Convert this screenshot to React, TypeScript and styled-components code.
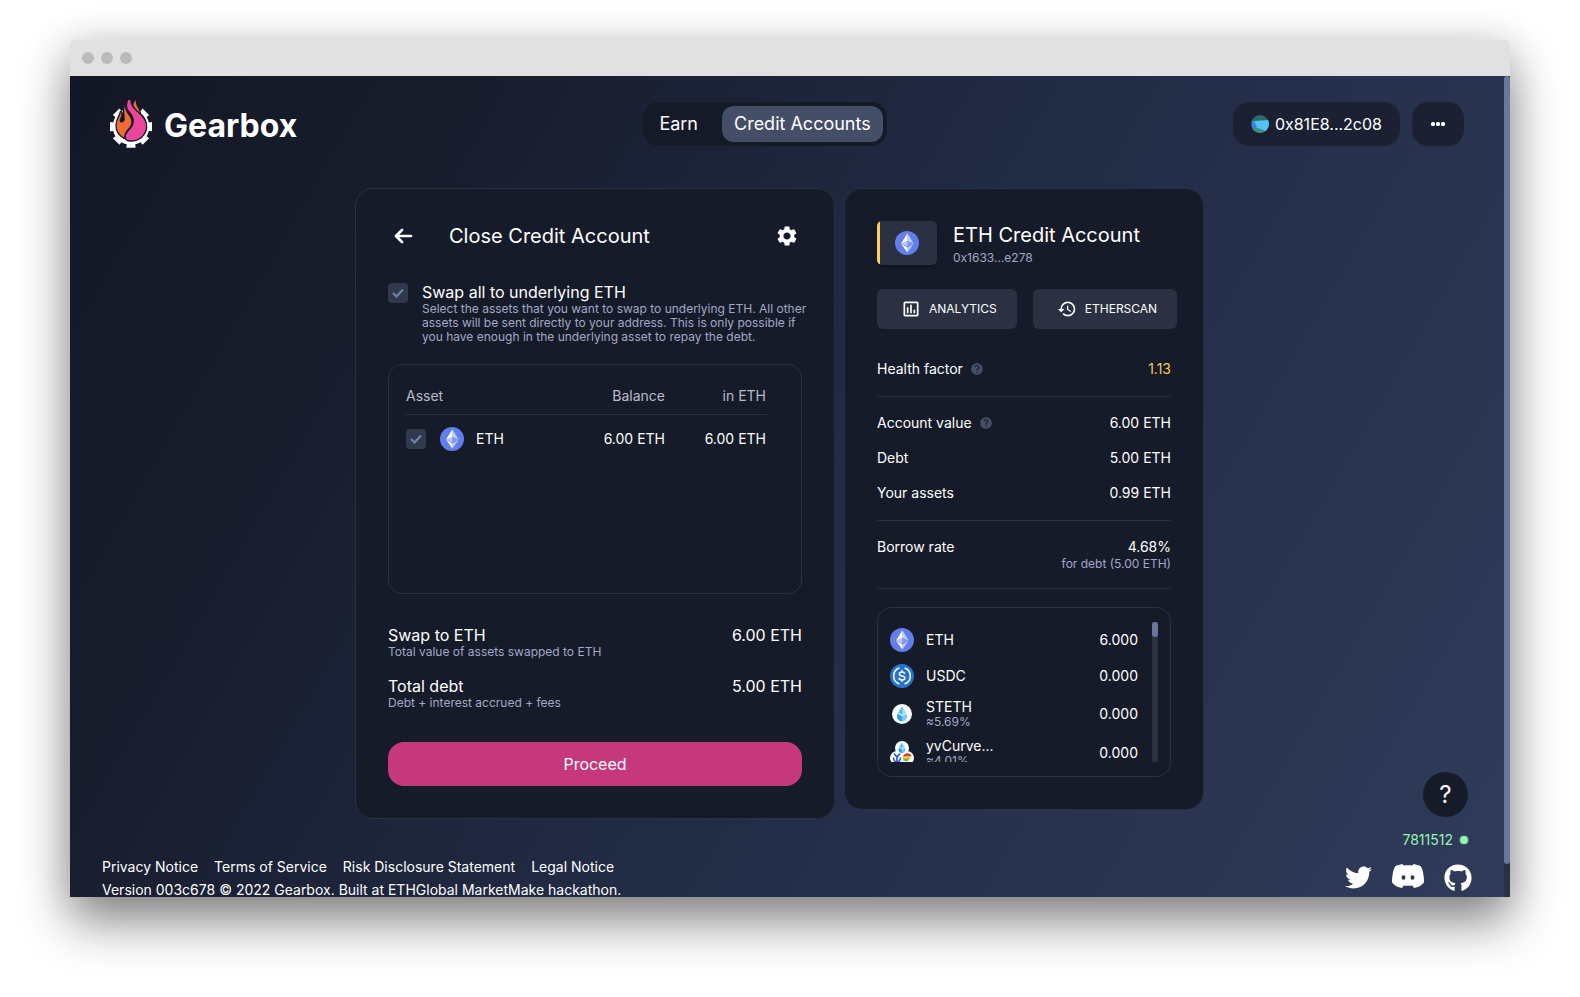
import React from "react";
import styled, { createGlobalStyle } from "styled-components";
import { MdSettings, MdHelp, MdHistory, MdOutlineAssessment } from "react-icons/md";
import { FaTwitter, FaGithub } from "react-icons/fa";

const color = {
  card: "#161b29",
  line: "#2a3044",
  raised: "#2b3042",
  check: "#31394f",
  muted: "#a3a8c8",
  accent: "#c5387c",
  thumb: "#6a769c",
  yellow: "#f5c952",
  green: "#94f5b0",
};

const Global = createGlobalStyle`
  * { box-sizing: border-box; }
  body {
    margin: 0;
    background: #fff;
    color: #fff;
    font-family: Inter, Roboto, "Liberation Sans", sans-serif;
    font-size: 14px;
    line-height: 20px;
  }
  a { color: inherit; text-decoration: none; }
  button { font: inherit; color: inherit; border: 0; padding: 0; background: none; cursor: pointer; }
  h1, h2, p, dl, dd, ul { margin: 0; padding: 0; font-weight: 400; }
  svg { display: block; flex: none; }
`;

const Page = styled.div`
  height: 100vh;
  padding: 40px 70px 100px;
  overflow: hidden;
`;

const BrowserWindow = styled.div`
  display: flex;
  flex-direction: column;
  height: 100%;
  border-radius: 5px 5px 0 0;
  box-shadow: 0 25px 50px rgba(0, 0, 0, 0.46), 0 0 40px rgba(0, 0, 0, 0.12);
`;

const TitleBar = styled.div`
  display: flex;
  align-items: center;
  gap: 7px;
  flex: none;
  height: 36px;
  padding: 0 12px;
  background: #e1e1e1;
  border-radius: 5px 5px 0 0;
`;

const WindowDot = styled.span`
  width: 12px;
  height: 12px;
  border-radius: 50%;
  background: #bababa;
`;

const Viewport = styled.div`
  display: flex;
  flex: 1;
  min-height: 0;
  position: relative;
  background: linear-gradient(120deg, #131725 0%, #181d2d 22%, #212a43 50%, #29334f 75%, #303b5b 100%);
`;

const Content = styled.div`
  flex: 1;
  min-width: 0;
  overflow: hidden;
`;

const ScrollTrack = styled.div`
  flex: none;
  width: 6px;
  background: ${color.raised};
`;

const ScrollThumb = styled.div<{ $size: string }>`
  height: ${(p) => p.$size};
  border-radius: 3px;
  background: ${color.thumb};
`;

const Header = styled.header`
  display: flex;
  align-items: center;
  justify-content: space-between;
  padding: 24px 40px 0;
`;

const Brand = styled.a`
  display: flex;
  align-items: flex-end;
  gap: 12px;
  font-size: 32px;
  line-height: 44px;
  font-weight: 700;
`;

const Tabs = styled.nav`
  display: flex;
  gap: 12px;
  padding: 4px;
  border-radius: 16px;
  background: #151a28;
`;

const Tab = styled.a<{ $active?: boolean }>`
  padding: 0 12px;
  border-radius: 12px;
  background: ${(p) => (p.$active ? "#454e67" : "transparent")};
  font-size: 18px;
  line-height: 36px;
`;

const HeaderActions = styled.div`
  display: flex;
  gap: 12px;
`;

const PillButton = styled.button`
  display: flex;
  align-items: center;
  gap: 6px;
  height: 44px;
  padding: 0 18px;
  border-radius: 16px;
  background: #1b2133;
  font-size: 16px;
`;

const Main = styled.main`
  display: flex;
  justify-content: center;
  align-items: flex-start;
  gap: 9px;
  padding: 40px 15px 36px 0;
`;

const Card = styled.section<{ $width: number }>`
  width: ${(p) => p.$width}px;
  padding: 32px;
  border: 1px solid ${color.line};
  border-radius: 18px;
  background: ${color.card};
`;

const CardHeader = styled.div`
  display: flex;
  align-items: center;
  height: 30px;
  padding: 0 3px;
`;

const IconButton = styled.button`
  display: grid;
  place-items: center;
  width: 24px;
  height: 24px;
`;

const CardTitle = styled.h1`
  flex: 1;
  padding-left: 34px;
  font-size: 20px;
  line-height: 28px;
`;

const AccountTitle = styled.h2`
  font-size: 20px;
  line-height: 28px;
`;

const Caption = styled.span`
  display: block;
  color: ${color.muted};
  font-size: 12px;
  line-height: 14px;
  white-space: nowrap;
`;

const Lead = styled.span`
  display: block;
  font-size: 16px;
  line-height: 19px;
`;

const SwapAll = styled.label`
  display: flex;
  gap: 14px;
  margin-top: 32px;
`;

const CheckFrame = styled.span`
  display: inline-grid;
  flex: none;
  width: 20px;
  height: 20px;

  > * { grid-area: 1 / 1; place-self: center; }
  > svg { pointer-events: none; }
`;

const CheckInput = styled.input`
  appearance: none;
  width: 20px;
  height: 20px;
  margin: 0;
  border-radius: 4px;
  background: ${color.check};
`;

const AssetBox = styled.div`
  height: 230px;
  margin-top: 20px;
  padding: 16px 34px 16px 16px;
  border: 1px solid ${color.line};
  border-radius: 14px;
`;

const AssetTable = styled.table`
  width: 100%;
  border-collapse: collapse;
  table-layout: fixed;
`;

const HeadCell = styled.th<{ $width?: number }>`
  width: ${(p) => (p.$width ? `${p.$width}px` : "auto")};
  height: 33px;
  padding: 0 1px 2px;
  border-bottom: 1px solid ${color.line};
  color: #b9bccb;
  font-weight: 400;
  text-align: ${(p) => (p.$width ? "right" : "left")};
`;

const AssetCell = styled.td<{ $numeric?: boolean }>`
  height: 49px;
  padding: 0 1px;
  text-align: ${(p) => (p.$numeric ? "right" : "left")};
`;

const AssetName = styled.label`
  display: flex;
  align-items: center;

  > svg { margin: 0 12px 0 14px; }
`;

const Summary = styled.dl`
  display: grid;
  gap: 18px;
  margin: 32px 0;
`;

const SummaryRow = styled.div`
  display: flex;
  justify-content: space-between;
`;

const Proceed = styled.button`
  width: 100%;
  height: 44px;
  border-radius: 16px;
  background: ${color.accent};
  font-size: 16px;
`;

const AccountHeader = styled.div`
  display: flex;
  gap: 16px;
`;

const AccountTile = styled.div`
  display: grid;
  place-items: center;
  width: 60px;
  height: 44px;
  border-radius: 5px;
  background: linear-gradient(90deg, #ffd057 3px, ${color.raised} 3px);
  box-shadow: 0 2px 3px rgba(0, 0, 0, 0.3);
`;

const AccountText = styled.div`
  display: flex;
  flex-direction: column;
  justify-content: space-between;
`;

const ExternalLinks = styled.div`
  display: flex;
  gap: 16px;
  width: max-content;
  margin: 24px 0 30px;
`;

const ExternalLink = styled.a`
  display: flex;
  align-items: center;
  gap: 8px;
  height: 40px;
  padding: 0 20px 0 24px;
  border-radius: 6px;
  background: ${color.raised};
  font-size: 12px;
`;

const Group = styled.dl`
  display: grid;
  gap: 15px;
  padding-bottom: 17px;
  margin-bottom: 16px;
  border-bottom: 1px solid ${color.line};
`;

const GroupRow = styled.div`
  display: flex;
  justify-content: space-between;
  align-items: flex-start;
`;

const Term = styled.dt`
  display: flex;
  align-items: center;
  gap: 7px;
`;

const Value = styled.dd<{ $tone?: string }>`
  color: ${(p) => p.$tone ?? "inherit"};
  text-align: right;
`;

const BalanceBox = styled.div`
  display: flex;
  justify-content: space-between;
  gap: 14px;
  height: 170px;
  margin-top: 18px;
  padding: 14px 12px;
  border: 1px solid ${color.line};
  border-radius: 14px;
`;

const BalanceList = styled.ul`
  flex: 1;
  overflow: hidden;
  list-style: none;
`;

const BalanceRow = styled.li<{ $tall: boolean }>`
  display: flex;
  align-items: center;
  gap: 12px;
  height: ${(p) => (p.$tall ? 39 : 36)}px;
  line-height: 16px;
`;

const BalanceName = styled.span`
  flex: 1;
`;

const Footer = styled.footer`
  display: flex;
  justify-content: space-between;
  align-items: flex-start;
  padding: 0 32px;
  line-height: 23px;
  white-space: nowrap;
`;

const LegalLinks = styled.div`
  display: flex;
  gap: 16px;
`;

const Copyright = styled.p`
  display: flex;
  gap: 4px;
`;

const Social = styled.div`
  display: flex;
  align-items: flex-start;
  gap: 20px;
  padding-top: 9px;
`;

const Floating = styled.div`
  position: absolute;
  right: 42px;
  bottom: 49px;
  display: flex;
  flex-direction: column;
  align-items: flex-end;
  gap: 15px;
`;

const HelpButton = styled.button`
  width: 45px;
  height: 45px;
  border-radius: 50%;
  background: ${color.card};
  font-size: 24px;
  line-height: 45px;
`;

const BlockNumber = styled.a`
  display: flex;
  align-items: center;
  gap: 7px;
  color: ${color.green};
  line-height: 16px;
`;

const StatusDot = styled.span`
  width: 8px;
  height: 8px;
  border-radius: 50%;
  background: ${color.green};
  box-shadow: 0 0 3px rgba(148, 245, 176, 0.5);
`;

const Logo = () => (
  <svg width="42" height="48" viewBox="0 0 126 144" aria-hidden="true">
    <g fill="#fff">
      {[0, 45, 90, 135, 180, 225, 270, 315].map((a) => (
        <path key={a} d="M49 17 H77 L75 32 H51 Z" transform={`rotate(${a} 63 80)`} />
      ))}
      <circle cx="63" cy="80" r="55" />
    </g>
    <circle cx="64" cy="76" r="46" fill="#141826" />
    <g stroke="#141826" strokeWidth="8" strokeLinejoin="round" paintOrder="stroke">
      <path fill="#f26a35" d="M78 0C69 9 68 19 74 27C79 32 84 35 89 38C89 24 74 18 78 0Z" />
      <path
        fill="#f26a35"
        d="M44 18C44 27 50 38 58 48C66 60 66 72 58 82C50 92 42 100 43 113C29 106 20 92 20 76C20 59 30 51 33 36C38 44 28 56 29 64C32 70 42 68 44 60C46 50 40 34 44 18Z"
      />
      <path
        fill="#ec459d"
        d="M55 0C50 12 50 24 58 34C68 46 76 58 69 76C64 88 48 96 47 112C48 119 53 121 61 121C86 122 107 104 108 80C108 60 96 50 84 38C72 28 61 18 61 0Z"
      />
    </g>
  </svg>
);

const EthIcon = () => (
  <svg width="24" height="24" viewBox="0 0 32 32" aria-hidden="true">
    <circle cx="16" cy="16" r="16" fill="#627eea" />
    <g fill="#fff">
      <path fillOpacity=".6" d="M16.5 3v9.87l8.34 3.73z" />
      <path d="M16.5 3 8.16 16.6l8.34-3.73z" />
      <path fillOpacity=".6" d="M16.5 21.97v6.7L24.84 17z" />
      <path d="M16.5 28.67v-6.7L8.16 17z" />
      <path fillOpacity=".2" d="m16.5 20.57 8.34-3.97-8.34-3.73z" />
      <path fillOpacity=".6" d="m8.16 16.6 8.34 3.97v-7.7z" />
    </g>
  </svg>
);

const UsdcIcon = () => (
  <svg width="24" height="24" viewBox="0 0 32 32" aria-hidden="true">
    <circle cx="16" cy="16" r="16" fill="#2775ca" />
    <g fill="none" stroke="#fff" strokeWidth="2">
      <path d="M12.5 5.4a11.2 11.2 0 0 0 0 21.2M19.5 5.4a11.2 11.2 0 0 1 0 21.2" />
      <path d="M19.6 13.2c-.3-1.8-1.6-2.5-3.6-2.5-2.2 0-3.6 1-3.6 2.6 0 3.8 7.4 1.5 7.4 5.4 0 1.7-1.5 2.7-3.8 2.7-2.2 0-3.7-.9-3.9-2.8M16 8.3v2.4M16 21.4v2.4" />
    </g>
  </svg>
);

const StethMark = () => (
  <>
    <path fill="#4bb4f5" d="M12 4.5 8.2 10.7 12 13l3.8-2.3z" />
    <path fill="#9ad9fb" d="M12 4.5v8.5l3.8-2.3z" />
    <path fill="#2f9fe8" d="M7.7 11.6 12 14.2v5.3a5.2 5.2 0 0 1-4.3-7.9z" />
    <path fill="#7accf8" d="M16.3 11.6 12 14.2v5.3a5.2 5.2 0 0 0 4.3-7.9z" />
  </>
);

const StethIcon = () => (
  <svg width="24" height="24" viewBox="0 0 24 24" aria-hidden="true">
    <circle cx="12" cy="12" r="10" fill="#fff" />
    <StethMark />
  </svg>
);

const CurveIcon = () => (
  <svg width="24" height="24" viewBox="0 0 24 24" aria-hidden="true">
    <g fill="#fff">
      <circle cx="12" cy="7" r="7" />
      <circle cx="7" cy="17" r="7" />
      <circle cx="17" cy="17" r="7" />
    </g>
    <g transform="translate(3.6 -1.4) scale(.7)">
      <StethMark />
    </g>
    <path
      d="M4 12.5l3 3.5 3-3.5M7 16v5M3.5 16.5c0 2.5 1.5 4.5 3.5 4.5s3.5-2 3.5-4.5"
      fill="none"
      stroke="#2450e0"
      strokeWidth="1.6"
    />
    <path d="M13 16c.5-5 8-5 8.500-.5z" fill="#e23b2e" />
    <path d="M13 15.500l8.500-.5-1.500 3h-7z" fill="#f7d038" />
    <path d="M13 17.500h6.500l-2 3-4-1z" fill="#5ac35a" />
  </svg>
);

const AvatarIcon = () => (
  <svg width="18" height="18" viewBox="0 0 18 18" aria-hidden="true">
    <clipPath id="avatar">
      <circle cx="9" cy="9" r="9" />
    </clipPath>
    <g clipPath="url(#avatar)">
      <rect width="18" height="18" fill="#2b6a66" />
      <path d="M0 12h18v6H0z" fill="#3d8f86" />
      <path d="M2 6l16-1v10l-3 1-11-4z" fill="#55c2f5" />
      <path d="M1 5.5 3 6l3 6-5 1z" fill="#3b7fe8" />
    </g>
  </svg>
);

const DotsIcon = () => (
  <svg width="16" height="16" viewBox="0 0 16 16" fill="#fff" aria-hidden="true">
    <rect x="1" y="6" width="4" height="4" rx="1.5" />
    <rect x="6" y="6" width="4" height="4" rx="1.5" />
    <rect x="11" y="6" width="4" height="4" rx="1.5" />
  </svg>
);

const DiscordIcon = () => (
  <svg width="32" height="24" viewBox="0 0 32 24" fill="#fff" aria-hidden="true">
    <path
      fillRule="evenodd"
      d="M10.500 0C7.700.4 5 1.200 3 2.500 1 6.500 0 12 0 18.500c2.300 3 6 5 10 5.500l1.700-2.600c2.800.6 5.800.6 8.600 0L22 24c4-.5 7.700-2.500 10-5.500C32 12 31 6.500 29 2.500 27 1.200 24.300.4 21.500 0l-1.200 1.600c-2.800-.4-5.800-.4-8.600 0zM11.500 11.300a2 2.200 0 1 0 0 4.400a2 2.200 0 1 0 0-4.400zM20.500 11.300a2 2.200 0 1 0 0 4.400a2 2.200 0 1 0 0-4.400z"
    />
  </svg>
);

const BackIcon = () => (
  <svg
    width="20"
    height="20"
    viewBox="0 0 20 20"
    fill="none"
    stroke="#fff"
    strokeWidth="2.7"
    strokeLinecap="round"
    strokeLinejoin="round"
    aria-hidden="true"
  >
    <path d="M18 10H3M9 4l-6 6 6 6" />
  </svg>
);

const Checkbox = ({ id }: { id: string }) => (
  <CheckFrame>
    <CheckInput type="checkbox" id={id} defaultChecked />
    <svg width="12" height="10" viewBox="0 0 12 10" fill="none" stroke="#7684ad" strokeWidth="2" aria-hidden="true">
      <path d="M1 5l3.5 3.5L11 1.5" />
    </svg>
  </CheckFrame>
);

const assets = [{ name: "ETH", balance: "6.00 ETH", value: "6.00 ETH" }];

const summary = [
  { label: "Swap to ETH", note: "Total value of assets swapped to ETH", value: "6.00 ETH" },
  { label: "Total debt", note: "Debt + interest accrued + fees", value: "5.00 ETH" },
];

const details: { label: string; value: string; note?: string; tone?: string; help?: boolean }[][] = [
  [{ label: "Health factor", value: "1.13", tone: color.yellow, help: true }],
  [
    { label: "Account value", value: "6.00 ETH", help: true },
    { label: "Debt", value: "5.00 ETH" },
    { label: "Your assets", value: "0.99 ETH" },
  ],
  [{ label: "Borrow rate", value: "4.68%", note: "for debt (5.00 ETH)" }],
];

const balances = [
  { name: "ETH", amount: "6.000", Icon: EthIcon },
  { name: "USDC", amount: "0.000", Icon: UsdcIcon },
  { name: "STETH", apy: "≈5.69%", amount: "0.000", Icon: StethIcon },
  { name: "yvCurve...", apy: "≈4.01%", amount: "0.000", Icon: CurveIcon },
];

const legal = ["Privacy Notice", "Terms of Service", "Risk Disclosure Statement", "Legal Notice"];

const CloseAccountCard = () => (
  <Card $width={480}>
    <CardHeader>
      <IconButton aria-label="Back">
        <BackIcon />
      </IconButton>
      <CardTitle>Close Credit Account</CardTitle>
      <IconButton aria-label="Settings">
        <MdSettings size={24} />
      </IconButton>
    </CardHeader>
    <SwapAll htmlFor="swap-all">
      <Checkbox id="swap-all" />
      <span>
        <Lead>Swap all to underlying ETH</Lead>
        <Caption>
          Select the assets that you want to swap to underlying ETH. All other
          <br />
          assets will be sent directly to your address. This is only possible if
          <br />
          you have enough in the underlying asset to repay the debt.
        </Caption>
      </span>
    </SwapAll>
    <AssetBox>
      <AssetTable>
        <thead>
          <tr>
            <HeadCell>Asset</HeadCell>
            <HeadCell $width={100}>Balance</HeadCell>
            <HeadCell $width={101}>in ETH</HeadCell>
          </tr>
        </thead>
        <tbody>
          {assets.map((a) => (
            <tr key={a.name}>
              <AssetCell>
                <AssetName htmlFor={`asset-${a.name}`}>
                  <Checkbox id={`asset-${a.name}`} />
                  <EthIcon />
                  {a.name}
                </AssetName>
              </AssetCell>
              <AssetCell $numeric>{a.balance}</AssetCell>
              <AssetCell $numeric>{a.value}</AssetCell>
            </tr>
          ))}
        </tbody>
      </AssetTable>
    </AssetBox>
    <Summary>
      {summary.map((s) => (
        <SummaryRow key={s.label}>
          <dt>
            <Lead>{s.label}</Lead>
            <Caption>{s.note}</Caption>
          </dt>
          <dd>
            <Lead>{s.value}</Lead>
          </dd>
        </SummaryRow>
      ))}
    </Summary>
    <Proceed>Proceed</Proceed>
  </Card>
);

const AccountCard = () => (
  <Card $width={360}>
    <AccountHeader>
      <AccountTile>
        <EthIcon />
      </AccountTile>
      <AccountText>
        <AccountTitle>ETH Credit Account</AccountTitle>
        <Caption>0x1633...e278</Caption>
      </AccountText>
    </AccountHeader>
    <ExternalLinks>
      <ExternalLink href="#analytics">
        <MdOutlineAssessment size={20} />
        ANALYTICS
      </ExternalLink>
      <ExternalLink href="#etherscan">
        <MdHistory size={20} />
        ETHERSCAN
      </ExternalLink>
    </ExternalLinks>
    {details.map((rows) => (
      <Group key={rows[0].label}>
        {rows.map((r) => (
          <GroupRow key={r.label}>
            <Term>
              {r.label}
              {r.help && <MdHelp size={14} color="#454e67" />}
            </Term>
            <Value $tone={r.tone}>
              {r.value}
              {r.note && <Caption>{r.note}</Caption>}
            </Value>
          </GroupRow>
        ))}
      </Group>
    ))}
    <BalanceBox>
      <BalanceList>
        {balances.map(({ name, apy, amount, Icon }) => (
          <BalanceRow key={name} $tall={Boolean(apy)}>
            <Icon />
            <BalanceName>
              {name}
              {apy && <Caption>{apy}</Caption>}
            </BalanceName>
            {amount}
          </BalanceRow>
        ))}
      </BalanceList>
      <ScrollTrack>
        <ScrollThumb $size="15px" />
      </ScrollTrack>
    </BalanceBox>
  </Card>
);

export default function App() {
  return (
    <Page>
      <Global />
      <BrowserWindow>
        <TitleBar>
          <WindowDot />
          <WindowDot />
          <WindowDot />
        </TitleBar>
        <Viewport>
          <Content>
            <Header>
              <Brand href="#home">
                <Logo />
                Gearbox
              </Brand>
              <Tabs>
                <Tab href="#earn">Earn</Tab>
                <Tab href="#accounts" $active>
                  Credit Accounts
                </Tab>
              </Tabs>
              <HeaderActions>
                <PillButton>
                  <AvatarIcon />
                  0x81E8...2c08
                </PillButton>
                <PillButton aria-label="More">
                  <DotsIcon />
                </PillButton>
              </HeaderActions>
            </Header>
            <Main>
              <CloseAccountCard />
              <AccountCard />
            </Main>
            <Footer>
              <div>
                <LegalLinks>
                  {legal.map((l) => (
                    <a key={l} href="#legal">
                      {l}
                    </a>
                  ))}
                </LegalLinks>
                <Copyright>
                  <span>Version 003c678</span>
                  <span>© 2022 Gearbox. Built at ETHGlobal MarketMake hackathon.</span>
                </Copyright>
              </div>
              <Social>
                <a href="#twitter" aria-label="Twitter">
                  <FaTwitter size={27} />
                </a>
                <a href="#discord" aria-label="Discord">
                  <DiscordIcon />
                </a>
                <a href="#github" aria-label="GitHub">
                  <FaGithub size={28} />
                </a>
              </Social>
            </Footer>
          </Content>
          <ScrollTrack>
            <ScrollThumb $size="96%" />
          </ScrollTrack>
          <Floating>
            <HelpButton aria-label="Help">?</HelpButton>
            <BlockNumber href="#block">
              7811512
              <StatusDot />
            </BlockNumber>
          </Floating>
        </Viewport>
      </BrowserWindow>
    </Page>
  );
}
